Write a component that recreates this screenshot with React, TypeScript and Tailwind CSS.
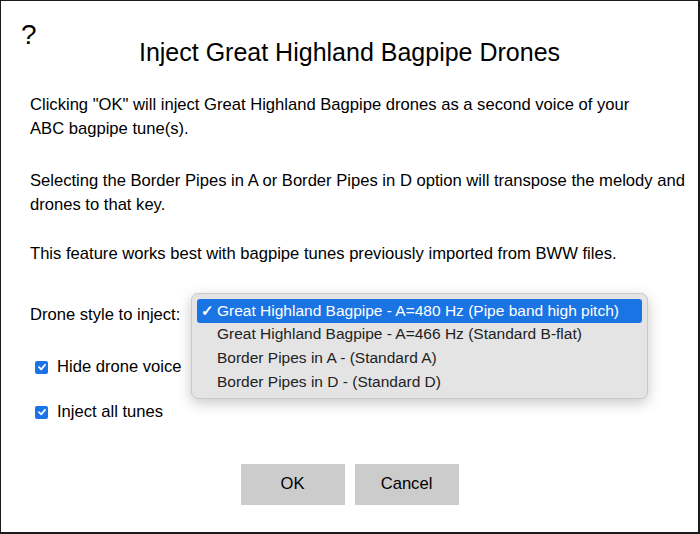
import React from "react";

function Check() {
  return (
    <span className="flex h-[13px] w-[13px] shrink-0 items-center justify-center rounded-[2px] bg-[#1a73e8]">
      <svg width="10" height="10" viewBox="0 0 10 10">
        <path d="M2 5.2 L4.2 7.3 L8 2.8" fill="none" stroke="#fff" strokeWidth="1.8" strokeLinecap="round" strokeLinejoin="round" />
      </svg>
    </span>
  );
}

export default function App() {
  const options = [
    "Great Highland Bagpipe - A=480 Hz (Pipe band high pitch)",
    "Great Highland Bagpipe - A=466 Hz (Standard B-flat)",
    "Border Pipes in A - (Standard A)",
    "Border Pipes in D - (Standard D)",
  ];
  return (
    <div
      className="h-[534px] w-[700px] border-t border-l border-r-2 border-b-2 border-[#1a1a1a] bg-white text-black"
      style={{ fontFamily: '"Liberation Sans", Arial, sans-serif' }}
    >
      <div className="pl-[20px] pt-[18px] text-[28px] leading-[32px]">?</div>
      <h1 className="mt-[-14px] text-center text-[25px] leading-[30px]">Inject Great Highland Bagpipe Drones</h1>
      <div className="pl-[29px] pr-[10px] pt-[26px] text-[16.6px] leading-[24px]">
        <p>
          Clicking "OK" will inject Great Highland Bagpipe drones as a second voice of your
          <br />
          ABC bagpipe tune(s).
        </p>
        <p className="mt-[28px]">Selecting the Border Pipes in A or Border Pipes in D option will transpose the melody and drones to that key.</p>
        <p className="mt-[25px]">This feature works best with bagpipe tunes previously imported from BWW files.</p>
        <div className="relative mt-[37px] flex items-center">
          <span>Drone style to inject:</span>
          <div className="absolute left-[161px] top-[-10px] w-[457px] rounded-[7px] border border-[#c9c9c9] bg-[#e4e4e4] p-[5px] shadow-[0_4px_14px_rgba(0,0,0,0.22)]">
            {options.map((o, i) => (
              <div
                key={o}
                className={
                  "flex h-[23.6px] items-center rounded-[3px] text-[15.5px] " +
                  (i === 0 ? "bg-[#1b74e4] text-white" : "text-[#222]")
                }
              >
                <span className="w-[20px] pl-[4px] text-[15px] font-bold">{i === 0 ? "✓" : ""}</span>
                <span>{o}</span>
              </div>
            ))}
          </div>
        </div>
        <label className="mt-[28px] flex items-center gap-[9px] pl-[5px]">
          <Check />
          <span>Hide drone voice</span>
        </label>
        <label className="mt-[21px] flex items-center gap-[9px] pl-[5px]">
          <Check />
          <span>Inject all tunes</span>
        </label>
      </div>
      <div className="mt-[40px] flex justify-center gap-[10px]">
        <button className="h-[41px] w-[104px] bg-[#cccccc] text-[16.6px]">OK</button>
        <button className="h-[41px] w-[104px] bg-[#cccccc] text-[16.6px]">Cancel</button>
      </div>
    </div>
  );
}
